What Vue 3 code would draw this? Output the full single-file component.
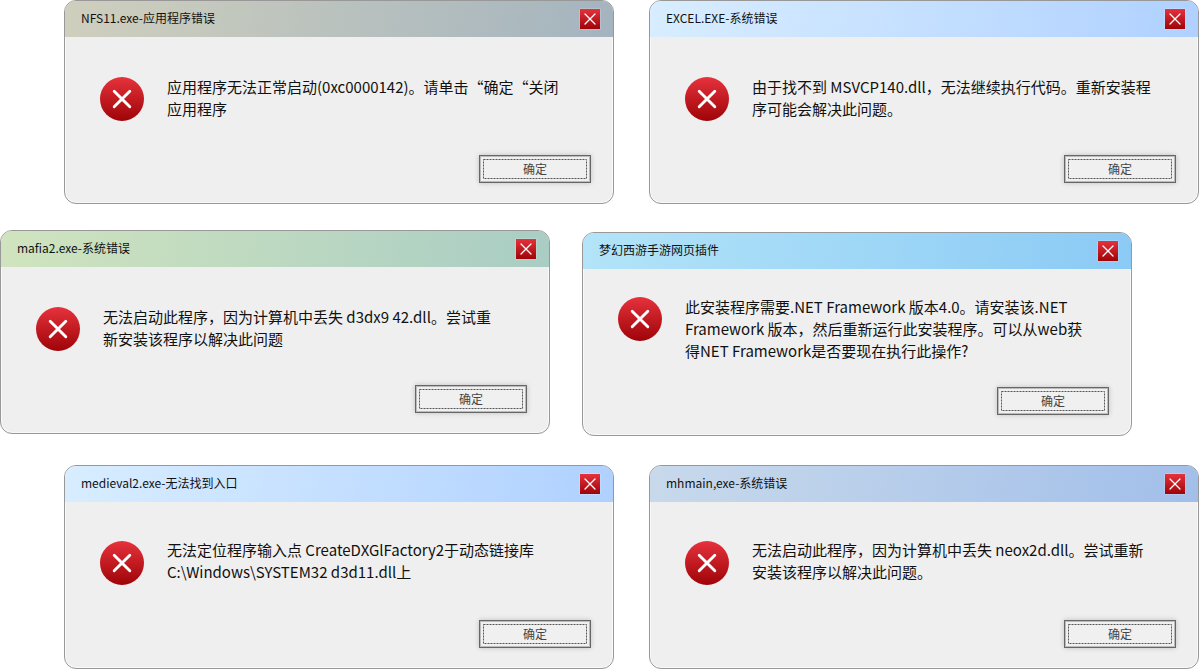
<script setup>
const rows = [
  {
    name: 'upper',
    dialogs: [
      {
        id: 'nfs',
        title: 'NFS11.exe-应用程序错误',
        lines: ['应用程序无法正常启动(0xc0000142)。请单击“确定“关闭', '应用程序'],
      },
      {
        id: 'excel',
        title: 'EXCEL.EXE-系统错误',
        lines: ['由于找不到 MSVCP140.dll，无法继续执行代码。重新安装程', '序可能会解决此问题。'],
      },
    ],
  },
  {
    name: 'middle',
    dialogs: [
      {
        id: 'mafia',
        title: 'mafia2.exe-系统错误',
        lines: ['无法启动此程序，因为计算机中丢失 d3dx9 42.dll。尝试重', '新安装该程序以解决此问题'],
      },
      {
        id: 'plugin',
        title: '梦幻西游手游网页插件',
        lines: [
          '此安装程序需要.NET Framework 版本4.0。请安装该.NET',
          'Framework 版本，然后重新运行此安装程序。可以从web获',
          '得NET Framework是否要现在执行此操作?',
        ],
      },
    ],
  },
  {
    name: 'lower',
    dialogs: [
      {
        id: 'medieval',
        title: 'medieval2.exe-无法找到入口',
        lines: ['无法定位程序输入点 CreateDXGlFactory2于动态链接库', 'C:\\Windows\\SYSTEM32 d3d11.dll上'],
      },
      {
        id: 'mhmain',
        title: 'mhmain,exe-系统错误',
        lines: ['无法启动此程序，因为计算机中丢失 neox2d.dll。尝试重新', '安装该程序以解决此问题。'],
      },
    ],
  },
]
</script>

<template>
  <main class="board">
    <div v-for="row in rows" :key="row.name" class="row" :class="row.name">
      <section
        v-for="d in row.dialogs"
        :key="d.id"
        class="dialog"
        :class="d.id"
        role="alertdialog"
        :aria-labelledby="d.id + '-title'"
        :aria-describedby="d.id + '-text'"
      >
        <header class="bar">
          <h2 :id="d.id + '-title'" class="title">{{ d.title }}</h2>
          <button class="close" type="button" aria-label="关闭">
            <svg viewBox="0 0 20 20" aria-hidden="true">
              <path d="M5 5 L15 15 M15 5 L5 15" stroke="#fff" stroke-width="1.3" stroke-linecap="round" />
            </svg>
          </button>
        </header>
        <div class="body">
          <svg class="icon" viewBox="0 0 44 44" aria-hidden="true">
            <defs>
              <linearGradient :id="d.id + '-red'" x1="0" y1="0" x2="0" y2="1">
                <stop offset="0" stop-color="#e6323c" />
                <stop offset="1" stop-color="#9e0408" />
              </linearGradient>
            </defs>
            <circle cx="22" cy="22" r="22" :fill="'url(#' + d.id + '-red)'" />
            <path d="M14.2 14.2 L29.8 29.8 M29.8 14.2 L14.2 29.8" stroke="#fff" stroke-width="2.9" stroke-linecap="round" />
          </svg>
          <p :id="d.id + '-text'" class="text">
            <span v-for="line in d.lines" :key="line" class="line">{{ line }}</span>
          </p>
        </div>
        <footer class="actions">
          <button class="ok" type="button">
            <svg class="focus" aria-hidden="true">
              <rect x="0.5" y="0.5" width="103" height="19" fill="none" stroke="#555" stroke-dasharray="2 1" />
            </svg>
            <span>确定</span>
          </button>
        </footer>
      </section>
    </div>
  </main>
</template>

<style>
body {
  margin: 0;
  background: #fff;
}
</style>

<style scoped>
.board {
  display: flex;
  flex-direction: column;
  font-family: "Noto Sans CJK SC", sans-serif;
  color: #111;
}
.row {
  display: flex;
  align-items: flex-start;
}
.upper,
.lower {
  gap: 35px;
  padding-left: 64px;
}
.middle {
  gap: 32px;
  padding-right: 67px;
  margin: 26px 0 29px;
}
.dialog {
  box-sizing: border-box;
  flex: 1 1 0;
  min-width: 0;
  border: 1px solid #989898;
  border-radius: 12px;
  overflow: hidden;
  background: #efefef;
  box-shadow: inset 0 0 0 1px #f9f9f9;
}
.plugin {
  margin-top: 2px;
}
.bar {
  display: flex;
  align-items: center;
  justify-content: space-between;
  height: 36px;
  padding: 0 13px 0 16px;
}
.nfs .bar { background: linear-gradient(100deg, #cfcfbd, #a4b4bf); }
.excel .bar,
.medieval .bar { background: linear-gradient(100deg, #d8edff, #b0d1ff); }
.mafia .bar { background: linear-gradient(100deg, #d0e4be, #a9cdc4); }
.plugin .bar { background: linear-gradient(100deg, #b3e4f8, #8bcaf5); }
.mhmain .bar { background: linear-gradient(100deg, #c8d9eb, #a2bfea); }
.title {
  margin: 0;
  padding-bottom: 2px;
  font-size: 12px;
  line-height: 18px;
  font-weight: 400;
}
.close {
  width: 20px;
  height: 20px;
  padding: 0;
  border: 0;
  background: linear-gradient(#e6323c, #9e0408);
  box-shadow: 0 0 1px #fff;
}
.close svg {
  display: block;
  width: 20px;
  height: 20px;
}
.body {
  display: flex;
  align-items: center;
  gap: 23px;
  box-sizing: border-box;
  min-height: 118px;
  padding: 5px 20px 0 35px;
}
.lower .body {
  padding-top: 3px;
}
.plugin .body {
  align-items: flex-start;
  padding-top: 28px;
}
.icon {
  flex: none;
  width: 44px;
  height: 44px;
}
.text {
  margin: 0;
  padding-bottom: 2px;
  font-size: 15px;
  line-height: 22px;
}
.lower .text {
  padding-bottom: 4px;
}
.plugin .text {
  margin-top: -1px;
}
.line {
  display: block;
  white-space: nowrap;
}
.actions {
  display: flex;
  justify-content: flex-end;
  padding: 0 22px 20px;
}
.ok {
  display: grid;
  place-items: center;
  box-sizing: border-box;
  width: 112px;
  height: 28px;
  padding: 0;
  border: 1px solid #666;
  background: #f0f0f0;
  box-shadow: inset 0 0 0 1px #bbb, 0 0 5px rgba(0, 0, 0, 0.2);
  font-family: inherit;
  font-size: 12px;
  line-height: 18px;
  color: #444;
}
.ok > * {
  grid-area: 1 / 1;
}
.focus {
  width: 104px;
  height: 20px;
}
</style>
